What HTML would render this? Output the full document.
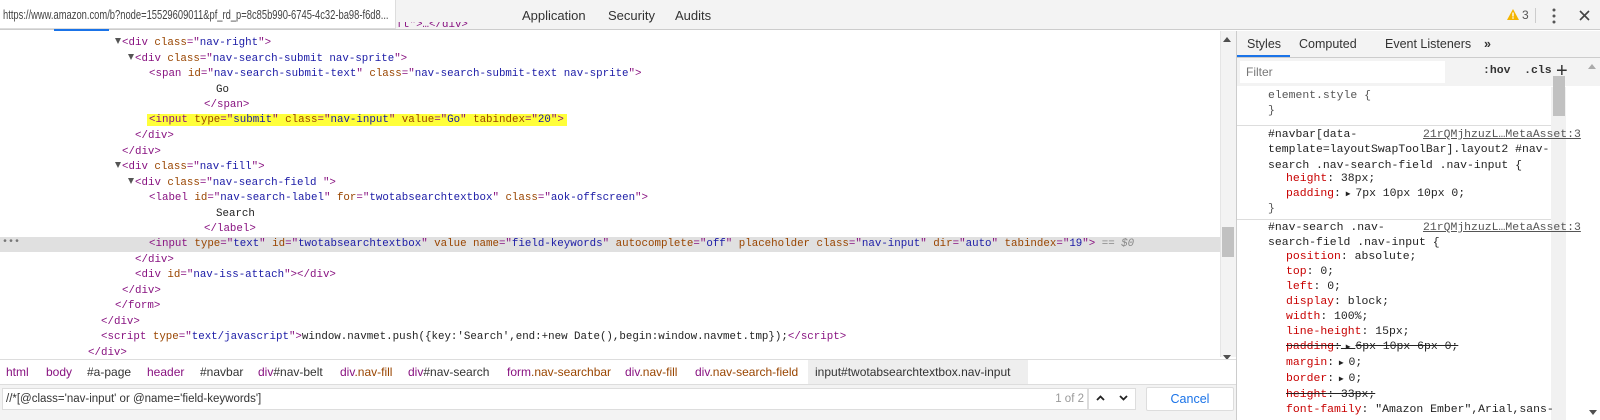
<!DOCTYPE html>
<html><head><meta charset="utf-8"><style>
*{margin:0;padding:0;box-sizing:border-box}
body{width:1600px;height:420px;overflow:hidden;background:#fff;font-family:"Liberation Sans",sans-serif;position:relative}
.mono{font-family:"Liberation Mono",monospace;font-size:11.45px}
.code{font-size:10.8px}
.t{color:#881280}.a{color:#994500}.v{color:#1a1aa6}.x{color:#222}
.row{position:absolute;left:0;width:1220px;height:15.45px;line-height:15.45px;white-space:pre}
.tri{display:inline-block;width:0;height:0;border-left:3.5px solid transparent;border-right:3.5px solid transparent;border-top:6px solid #555;margin-right:1px;vertical-align:1px}
.sr{position:absolute;white-space:pre;line-height:15.3px}
.p{color:#c80000}
</style></head><body>
<div style="position:absolute;left:0;top:0;width:1600px;height:30px;background:#f3f3f3;border-bottom:1px solid #ccc"></div>
<div style="position:absolute;left:0;top:0;width:396px;height:29px;background:#fff;border-right:1px solid #ddd;border-bottom:1px solid #ddd;z-index:5;overflow:hidden"><div style="font-size:12.5px;color:#444;line-height:30px;padding-left:4px;white-space:nowrap;transform:scaleX(0.75);transform-origin:0 0">https://www.amazon.com/b?node=15529609011&amp;pf_rd_p=8c85b990-6745-4c32-ba98-f6d8...</div></div>
<div style="position:absolute;left:54px;top:29px;width:55px;height:2px;background:#1a73e8"></div>
<div style="position:absolute;top:0;left:522px;line-height:31px;font-size:13px;color:#333">Application</div>
<div style="position:absolute;top:0;left:608px;line-height:31px;font-size:13px;color:#333">Security</div>
<div style="position:absolute;top:0;left:675px;line-height:31px;font-size:13px;color:#333">Audits</div>
<svg style="position:absolute;left:1507px;top:9px" width="12" height="11"><path d="M6 0L12 11H0Z" fill="#f4b400"/><rect x="5.3" y="3.5" width="1.4" height="4" fill="#fff"/><rect x="5.3" y="8.3" width="1.4" height="1.4" fill="#fff"/></svg>
<div style="position:absolute;left:1522px;top:0;line-height:31px;font-size:12px;color:#555">3</div>
<div style="position:absolute;left:1535px;top:8px;width:1px;height:15px;background:#ccc"></div>
<svg style="position:absolute;left:1552px;top:8px" width="4" height="16"><circle cx="2" cy="2" r="1.5" fill="#555"/><circle cx="2" cy="8" r="1.5" fill="#555"/><circle cx="2" cy="14" r="1.5" fill="#555"/></svg>
<svg style="position:absolute;left:1579px;top:10px" width="11" height="11"><path d="M1 1L10 10M10 1L1 10" stroke="#444" stroke-width="1.6"/></svg>

<div class="mono code">
<div class="row" style="top:22px;height:8px;overflow:hidden;line-height:6px"><span style="padding-left:280px" class="t">&lt;div class="nav-left"&gt;…&lt;/div&gt;</span></div>
<div class="row" style="top:36px"><span style="padding-left:115px"></span><span class="tri"></span><span class="t">&lt;div </span><span class="a">class</span><span class="t">="</span><span class="v">nav-right</span><span class="t">"&gt;</span></div>
<div class="row" style="top:51.5px"><span style="padding-left:128px"></span><span class="tri"></span><span class="t">&lt;div </span><span class="a">class</span><span class="t">="</span><span class="v">nav-search-submit nav-sprite</span><span class="t">"&gt;</span></div>
<div class="row" style="top:67px"><span style="padding-left:149px"></span><span class="t">&lt;span </span><span class="a">id</span><span class="t">="</span><span class="v">nav-search-submit-text</span><span class="t">" </span><span class="a">class</span><span class="t">="</span><span class="v">nav-search-submit-text nav-sprite</span><span class="t">"&gt;</span></div>
<div class="row x" style="top:82.5px;padding-left:216px">Go</div>
<div class="row t" style="top:98px;padding-left:204px">&lt;/span&gt;</div>
<div class="row" style="top:113px"><span style="margin-left:147px;background:#ffff3a;padding:0 3px 0 2px"><span class="t">&lt;input </span><span class="a">type</span><span class="t">="</span><span class="v">submit</span><span class="t">" </span><span class="a">class</span><span class="t">="</span><span class="v">nav-input</span><span class="t">" </span><span class="a">value</span><span class="t">="</span><span class="v">Go</span><span class="t">" </span><span class="a">tabindex</span><span class="t">="</span><span class="v">20</span><span class="t">"&gt;</span></span></div>
<div class="row t" style="top:129px;padding-left:135px">&lt;/div&gt;</div>
<div class="row t" style="top:144.5px;padding-left:122px">&lt;/div&gt;</div>
<div class="row" style="top:160px"><span style="padding-left:115px"></span><span class="tri"></span><span class="t">&lt;div </span><span class="a">class</span><span class="t">="</span><span class="v">nav-fill</span><span class="t">"&gt;</span></div>
<div class="row" style="top:175.5px"><span style="padding-left:128px"></span><span class="tri"></span><span class="t">&lt;div </span><span class="a">class</span><span class="t">="</span><span class="v">nav-search-field </span><span class="t">"&gt;</span></div>
<div class="row" style="top:191px"><span style="padding-left:149px"></span><span class="t">&lt;label </span><span class="a">id</span><span class="t">="</span><span class="v">nav-search-label</span><span class="t">" </span><span class="a">for</span><span class="t">="</span><span class="v">twotabsearchtextbox</span><span class="t">" </span><span class="a">class</span><span class="t">="</span><span class="v">aok-offscreen</span><span class="t">"&gt;</span></div>
<div class="row x" style="top:206.5px;padding-left:216px">Search</div>
<div class="row t" style="top:222px;padding-left:204px">&lt;/label&gt;</div>
<div class="row" style="top:237px;background:#e0e0e0"><span style="position:absolute;left:2px;color:#777;font-size:10px;top:-2px">•••</span><span style="padding-left:149px"></span><span class="t">&lt;input </span><span class="a">type</span><span class="t">="</span><span class="v">text</span><span class="t">" </span><span class="a">id</span><span class="t">="</span><span class="v">twotabsearchtextbox</span><span class="t">" </span><span class="a">value name</span><span class="t">="</span><span class="v">field-keywords</span><span class="t">" </span><span class="a">autocomplete</span><span class="t">="</span><span class="v">off</span><span class="t">" </span><span class="a">placeholder class</span><span class="t">="</span><span class="v">nav-input</span><span class="t">" </span><span class="a">dir</span><span class="t">="</span><span class="v">auto</span><span class="t">" </span><span class="a">tabindex</span><span class="t">="</span><span class="v">19</span><span class="t">"&gt;</span><span style="color:#888"> == <i>$0</i></span></div>
<div class="row t" style="top:252.5px;padding-left:135px">&lt;/div&gt;</div>
<div class="row" style="top:268px"><span style="padding-left:135px"></span><span class="t">&lt;div </span><span class="a">id</span><span class="t">="</span><span class="v">nav-iss-attach</span><span class="t">"&gt;&lt;/div&gt;</span></div>
<div class="row t" style="top:283.5px;padding-left:122px">&lt;/div&gt;</div>
<div class="row t" style="top:299px;padding-left:115px">&lt;/form&gt;</div>
<div class="row t" style="top:314.5px;padding-left:101px">&lt;/div&gt;</div>
<div class="row" style="top:330px"><span style="padding-left:101px"></span><span class="t">&lt;script </span><span class="a">type</span><span class="t">="</span><span class="v">text/javascript</span><span class="t">"&gt;</span><span class="x">window.navmet.push({key:'Search',end:+new Date(),begin:window.navmet.tmp});</span><span class="t">&lt;/script&gt;</span></div>
<div class="row t" style="top:345.5px;padding-left:88px;height:12px;overflow:hidden">&lt;/div&gt;</div>
</div>
<div style="position:absolute;left:1220px;top:31px;width:16px;height:326px;background:#f3f3f3;border-left:1px solid #e5e5e5"></div>
<div style="position:absolute;left:1222px;top:227px;width:12px;height:30px;background:#c1c1c1"></div>
<svg style="position:absolute;left:1223px;top:37px" width="8" height="5"><path d="M0 5L4 0L8 5Z" fill="#505050"/></svg>
<svg style="position:absolute;left:1223px;top:355px" width="8" height="5"><path d="M0 0L4 5L8 0Z" fill="#505050"/></svg>

<div style="position:absolute;left:0;top:359px;width:1236px;height:26px;background:#fff;border-top:1px solid #ddd;border-bottom:1px solid #ddd;font-size:12px;line-height:25px;white-space:nowrap">
<span style="position:absolute;left:6px" class="t">html</span>
<span style="position:absolute;left:46px" class="t">body</span>
<span style="position:absolute;left:87px;color:#333">#a-page</span>
<span style="position:absolute;left:147px" class="t">header</span>
<span style="position:absolute;left:200px;color:#333">#navbar</span>
<span style="position:absolute;left:258px"><span class="t">div</span><span style="color:#333">#nav-belt</span></span>
<span style="position:absolute;left:340px;color:#881280">div<span class="a">.nav-fill</span></span>
<span style="position:absolute;left:408px"><span class="t">div</span><span style="color:#333">#nav-search</span></span>
<span style="position:absolute;left:507px"><span class="t">form</span><span class="a">.nav-searchbar</span></span>
<span style="position:absolute;left:625px"><span class="t">div</span><span class="a">.nav-fill</span></span>
<span style="position:absolute;left:695px"><span class="t">div</span><span class="a">.nav-search-field</span></span>
<span style="position:absolute;left:808px;top:0;width:220px;height:24px;background:#eee;padding-left:7px;color:#333">input#twotabsearchtextbox.nav-input</span>
</div>
<div style="position:absolute;left:0;top:385px;width:1236px;height:35px;background:#f3f3f3"></div>
<div style="position:absolute;left:2px;top:388px;width:1086px;height:22px;background:#fff;border:1px solid #ddd;font-size:11.5px;line-height:20px;padding-left:3px;color:#333">//*[@class='nav-input' or @name='field-keywords']<span style="position:absolute;right:3px;color:#999">1 of 2</span></div>
<div style="position:absolute;left:1088px;top:388px;width:48px;height:22px;background:#fff;border:1px solid #ddd"></div>
<svg style="position:absolute;left:1096px;top:395px" width="9" height="6"><path d="M1 5L4.5 1.5L8 5" stroke="#222" stroke-width="1.8" fill="none"/></svg>
<svg style="position:absolute;left:1119px;top:395px" width="9" height="6"><path d="M1 1L4.5 4.5L8 1" stroke="#222" stroke-width="1.8" fill="none"/></svg>
<div style="position:absolute;left:1146px;top:387px;width:88px;height:24px;background:#fff;border:1px solid #ddd;border-radius:2px;color:#1a73e8;font-size:12.5px;line-height:22px;text-align:center">Cancel</div>

<div style="position:absolute;left:1236px;top:31px;width:364px;height:389px;background:#fff;border-left:1px solid #ccc"></div>
<div style="position:absolute;left:1237px;top:31px;width:363px;height:27px;background:#f3f3f3;border-bottom:1px solid #ccc;font-size:12.5px;line-height:26px;color:#333">
<span style="position:absolute;left:10px">Styles</span>
<span style="position:absolute;left:62px">Computed</span>
<span style="position:absolute;left:148px">Event Listeners</span>
<span style="position:absolute;left:247px;font-weight:bold">»</span>
<div style="position:absolute;left:0;top:24px;width:53px;height:2px;background:#1a73e8"></div>
</div>
<div style="position:absolute;left:1237px;top:58px;width:363px;height:28px;background:#f3f3f3"></div>
<div style="position:absolute;left:1240px;top:61px;width:205px;height:22px;background:#fff;font-size:12px;color:#777;line-height:22px;padding-left:6px">Filter</div>
<div class="mono" style="position:absolute;left:1483px;top:64px;font-weight:bold;color:#333">:hov&nbsp;&nbsp;.cls</div>
<div style="position:absolute;left:1556px;top:60px;font-size:20px;color:#333">+</div>
<div style="position:absolute;left:1551px;top:87px;width:15px;height:333px;background:#f1f1f1"></div>
<div style="position:absolute;left:1553px;top:76px;width:12px;height:40px;background:#c1c1c1"></div>
<svg style="position:absolute;left:1588px;top:64px" width="8" height="5"><path d="M0 5L4 0L8 5Z" fill="#aaa"/></svg>
<svg style="position:absolute;left:1589px;top:410px" width="8" height="5"><path d="M0 0L4 5L8 0Z" fill="#505050"/></svg>

<div class="mono">
<div class="sr" style="left:1268px;top:88px;color:#555">element.style {<br>}</div>
<div style="position:absolute;left:1237px;top:125px;width:314px;height:1px;background:#ddd"></div>
<div class="sr" style="left:1268px;top:127px;color:#222">#navbar[data-<br>template=layoutSwapToolBar].layout2 #nav-<br>search .nav-search-field .nav-input {</div>
<div class="sr" style="left:1423px;top:127px;color:#555;text-decoration:underline">21rQMjhzuzL…MetaAsset:3</div>
<div class="sr" style="left:1286px;top:171px;color:#222"><span class="p">height</span>: 38px;<br><span class="p">padding</span>:<span style="font-size:8px"> ▶ </span>7px 10px 10px 0;</div>
<div class="sr" style="left:1268px;top:201px;color:#555">}</div>
<div style="position:absolute;left:1237px;top:219px;width:314px;height:1px;background:#ddd"></div>
<div class="sr" style="left:1268px;top:220px;color:#222">#nav-search .nav-<br>search-field .nav-input {</div>
<div class="sr" style="left:1423px;top:220px;color:#555;text-decoration:underline">21rQMjhzuzL…MetaAsset:3</div>
<div class="sr" style="left:1286px;top:249px;color:#222;line-height:15px"><span class="p">position</span>: absolute;<br><span class="p">top</span>: 0;<br><span class="p">left</span>: 0;<br><span class="p">display</span>: block;<br><span class="p">width</span>: 100%;<br><span class="p">line-height</span>: 15px;<br><s><span class="p">padding</span>:<span style="font-size:8px"> ▶ </span>6px 10px 6px 0;</s><br><span class="p">margin</span>:<span style="font-size:8px"> ▶ </span>0;<br><span class="p">border</span>:<span style="font-size:8px"> ▶ </span>0;<br><s><span class="p">height</span>: 33px;</s><br><span class="p">font-family</span>: "Amazon Ember",Arial,sans-</div>
</div>
</body></html>
